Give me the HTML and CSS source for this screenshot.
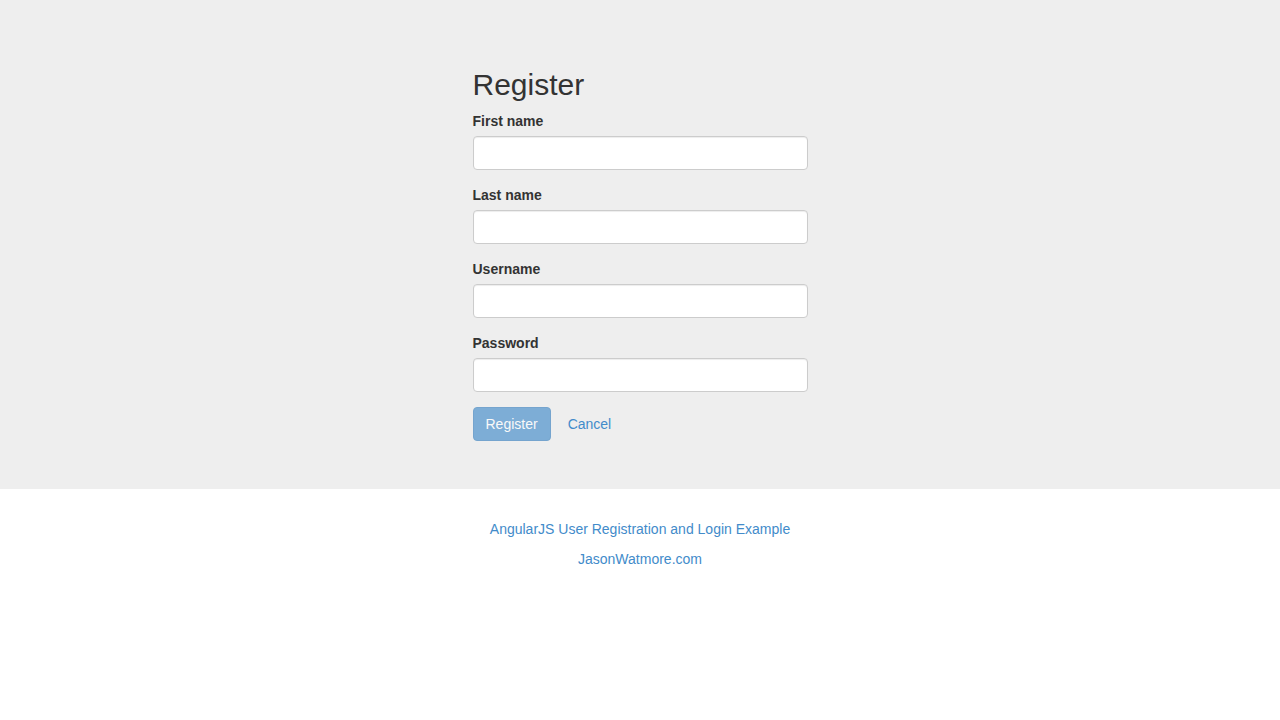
FILE: index.html
```html
<!DOCTYPE html>
<html>
<head>
<meta charset="utf-8">
<title>AngularJS User Registration and Login Example</title>
<link rel="stylesheet" href="styles.css">
</head>
<body>
<div class="jumbotron">
  <div class="col">
    <h2 class="title">Register</h2>
    <form class="form" onsubmit="return false">
      <div class="form-group">
        <label for="firstName">First name</label>
        <input type="text" id="firstName" class="form-control">
      </div>
      <div class="form-group">
        <label for="lastName">Last name</label>
        <input type="text" id="lastName" class="form-control">
      </div>
      <div class="form-group">
        <label for="username">Username</label>
        <input type="text" id="username" class="form-control">
      </div>
      <div class="form-group">
        <label for="password">Password</label>
        <input type="password" id="password" class="form-control">
      </div>
      <div class="form-actions">
        <button type="submit" class="btn btn-primary" disabled>Register</button>
        <a href="#" class="btn btn-link">Cancel</a>
      </div>
    </form>
  </div>
</div>
<div class="credits">
  <p><a href="#">AngularJS User Registration and Login Example</a></p>
  <p><a href="#">JasonWatmore.com</a></p>
</div>
</body>
</html>
```

FILE: styles.css
```css
* { box-sizing: border-box; }
html, body { margin: 0; padding: 0; }
body {
  font-family: "Liberation Sans", Arial, sans-serif;
  font-size: 14px;
  line-height: 1.42857143;
  color: #333;
  background: #fff;
}
a { color: #428bca; text-decoration: none; }
.jumbotron {
  background: #eee;
  padding: 48px 0;
  margin-bottom: 30px;
}
.col {
  width: 335px;
  margin: 0 auto;
}
.title {
  font-size: 30px;
  font-weight: 500;
  line-height: 1.1;
  margin: 20px 0 10px;
  color: #333;
}
.form { margin: 0; }
.form-group { margin-bottom: 15px; }
.form-group label {
  display: inline-block;
  max-width: 100%;
  margin-bottom: 5px;
  font-weight: 700;
}
.form-control {
  display: block;
  width: 100%;
  height: 34px;
  padding: 6px 12px;
  font-family: inherit;
  font-size: 14px;
  line-height: 1.42857143;
  color: #555;
  background: #fff;
  border: 1px solid #ccc;
  border-radius: 4px;
  box-shadow: inset 0 1px 1px rgba(0,0,0,.075);
  margin: 0;
}
.form-actions { display: flex; align-items: center; gap: 4px; }
.btn {
  display: inline-block;
  padding: 6px 12px;
  font-family: inherit;
  font-size: 14px;
  line-height: 1.42857143;
  text-align: center;
  border: 1px solid transparent;
  border-radius: 4px;
  margin: 0;
}
.btn-primary {
  color: #fff;
  background: #428bca;
  border-color: #357ebd;
}
.btn-primary:disabled { opacity: .65; cursor: not-allowed; }
.btn-link { color: #428bca; background: transparent; }
.credits { text-align: center; }
.credits p { margin: 0 0 10px; }
```
